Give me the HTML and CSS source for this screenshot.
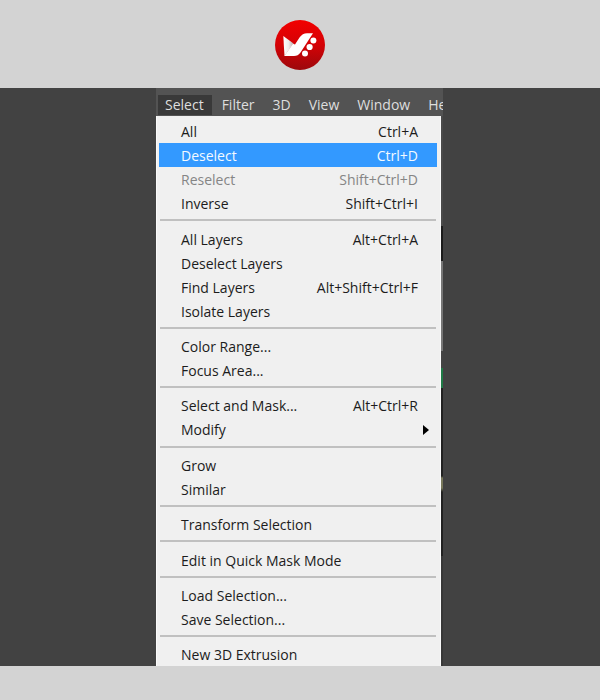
FILE: index.html
```
<!DOCTYPE html>
<html lang="en">
<head>
<meta charset="utf-8">
<title>Select menu</title>
<link rel="stylesheet" href="styles.css">
</head>
<body>
<header class="brand">
  <svg class="logo" viewBox="0 0 50 50" role="img" aria-label="Logo">
    <defs>
      <linearGradient id="red" x1="0" y1="0" x2="0" y2="1"><stop offset="0" stop-color="#f20000"/><stop offset=".5" stop-color="#d40206"/><stop offset="1" stop-color="#9c080c"/></linearGradient>
      <linearGradient id="fold" x1="0" y1="0" x2="1" y2="0"><stop offset="0" stop-color="#fff"/><stop offset=".5" stop-color="#f0eded"/><stop offset="1" stop-color="#b8b0b0"/></linearGradient>
    </defs>
    <circle cx="25" cy="25" r="25" fill="url(#red)"/>
    <path d="M8.300 16L18.500 23.500L9.500 36Z" fill="url(#fold)"/>
    <path d="M9.300 36L18 23.800L20 24.500L24.500 17.500Q27.500 13.200 32 13.200H38L25.500 32.500Q23 36 19 36Z" fill="#fff"/>
    <circle cx="38.400" cy="20.400" r="3" fill="#fff"/>
    <circle cx="34.600" cy="27" r="3.100" fill="#fff"/>
    <circle cx="30" cy="33.600" r="3" fill="#fff"/>
  </svg>
</header>
<main class="stage">
  <div class="app">
    <nav class="menubar" aria-label="Menu bar">
      <button class="tab tab-open">Select</button>
      <button class="tab">Filter</button>
      <button class="tab">3D</button>
      <button class="tab">View</button>
      <button class="tab">Window</button>
      <button class="tab">He</button>
    </nav>
    <div class="canvas">
      <div class="menu">
        <button class="item">All<span>Ctrl+A</span></button>
        <button class="item item-active">Deselect<span>Ctrl+D</span></button>
        <button class="item" disabled>Reselect<span>Shift+Ctrl+D</span></button>
        <button class="item">Inverse<span>Shift+Ctrl+I</span></button>
        <hr class="rule rule-roomy">
        <button class="item">All Layers<span>Alt+Ctrl+A</span></button>
        <button class="item">Deselect Layers</button>
        <button class="item">Find Layers<span>Alt+Shift+Ctrl+F</span></button>
        <button class="item">Isolate Layers</button>
        <hr class="rule">
        <button class="item">Color Range...</button>
        <button class="item">Focus Area...</button>
        <hr class="rule">
        <button class="item">Select and Mask...<span>Alt+Ctrl+R</span></button>
        <button class="item item-parent">Modify<svg class="arrow" viewBox="0 0 6 10" aria-hidden="true"><path d="M0 0L6 5L0 10Z"/></svg></button>
        <hr class="rule">
        <button class="item">Grow</button>
        <button class="item">Similar</button>
        <hr class="rule">
        <button class="item">Transform Selection</button>
        <hr class="rule rule-roomy">
        <button class="item">Edit in Quick Mask Mode</button>
        <hr class="rule">
        <button class="item">Load Selection...</button>
        <button class="item">Save Selection...</button>
        <hr class="rule">
        <button class="item">New 3D Extrusion</button>
      </div>
    </div>
  </div>
</main>
</body>
</html>
```
FILE: styles.css
```
* { box-sizing: border-box; }
body {
  margin: 0;
  padding-bottom: 34px;
  background: #d3d3d3;
  font-family: "Open Sans", "Noto Sans", sans-serif;
  font-size: 14px;
}
button {
  border: 0;
  padding: 0;
  background: none;
  color: inherit;
  font: inherit;
  white-space: nowrap;
}
.brand {
  display: flex;
  justify-content: center;
  padding: 20px 0 18px;
}
.logo { width: 50px; height: 50px; }
.stage {
  display: flex;
  justify-content: center;
  background: #424242;
}
.app {
  width: 100%;
  max-width: 288px;
  padding-right: 1px;
}
.menubar {
  display: flex;
  gap: 2px;
  height: 28px;
  padding: 7px 0 1px 2px;
  overflow: hidden;
  background: #535353;
  color: #dedede;
}
.tab {
  flex: none;
  padding: 0 8px;
  line-height: 20px;
}
.tab-open { padding-left: 7px; background: #393939; }
/* The edge of the document shows in a thin strip beside the menu. */
.canvas {
  padding-right: 2px;
  background: linear-gradient(#4a4a4a 110px, #1c1c1c 110px 145px, #777 145px 235px, #444 235px 252px, #1f7a46 252px 272px, #222 272px 360px, #77775a 362px 372px, #222 376px 440px, #383838 440px);
}
.menu {
  padding: 3px 3px 0 2px;
  border: solid #fafafa;
  border-width: 0 1px;
  background: #f0f0f0;
  color: #1c1c1c;
}
.item {
  display: flex;
  justify-content: space-between;
  align-items: center;
  width: 100%;
  height: 24px;
  padding: 0 19px 0 22px;
}
.item-active { background: #3399ff; color: #f4faff; }
.item:disabled { color: #858585; }
.item-parent { height: 25px; padding-right: 8px; }
.arrow { width: 6px; height: 10px; }
.rule {
  height: 2px;
  margin: 4px 1px 5px;
  border: 0;
  background: #c0c0c0;
}
.rule-roomy { margin-bottom: 6px; }
```
